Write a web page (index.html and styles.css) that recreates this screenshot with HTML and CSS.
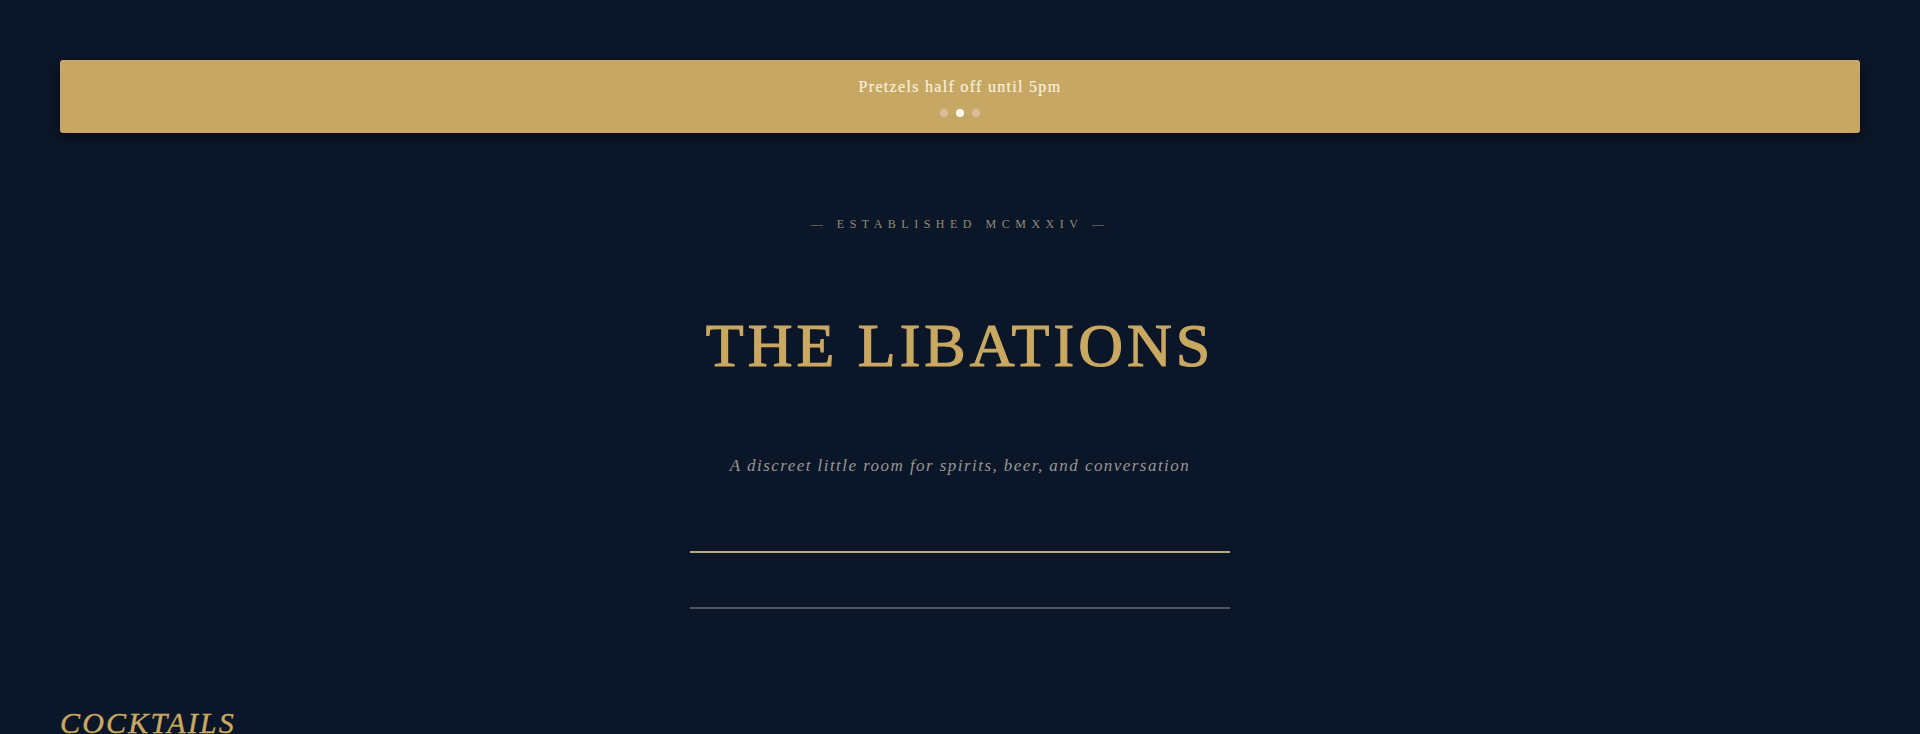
FILE: index.html
```html
<!DOCTYPE html>
<html lang="en">
<head>
<meta charset="utf-8">
<title>The Libations</title>
<link rel="stylesheet" href="styles.css">
</head>
<body>
  <div class="page">
    <div class="promo">
      <p class="promo-text">Pretzels half off until 5pm</p>
      <div class="dots">
        <span class="dot"></span>
        <span class="dot active"></span>
        <span class="dot"></span>
      </div>
    </div>

    <header class="hero">
      <p class="established">— ESTABLISHED MCMXXIV —</p>
      <h1 class="title">THE LIBATIONS</h1>
      <p class="tagline">A discreet little room for spirits, beer, and conversation</p>
      <div class="rule rule-gold"></div>
      <div class="rule rule-grey"></div>
    </header>

    <section class="menu">
      <h2 class="section-title">COCKTAILS</h2>
    </section>
  </div>
</body>
</html>
```
FILE: styles.css
```css
html, body {
  margin: 0;
  padding: 0;
  background: #0b1628;
}
body {
  font-family: "Liberation Serif", "DejaVu Serif", serif;
  height: 734px;
  overflow: hidden;
}
.page {
  padding: 60px 60px 0;
}
.promo {
  background: #c6a864;
  border-radius: 3px;
  box-shadow: 0 4px 10px rgba(0, 0, 0, 0.45);
  padding: 17px 0 16px;
  display: flex;
  flex-direction: column;
  align-items: center;
}
.promo-text {
  margin: 0;
  font-size: 16px;
  line-height: 20px;
  letter-spacing: 1.3px;
  color: #f9f1de;
  -webkit-text-stroke: 0.2px #f9f1de;
}
.dots {
  display: flex;
  gap: 8px;
  margin-top: 12px;
}
.dot {
  width: 8px;
  height: 8px;
  border-radius: 50%;
  background: rgba(238, 200, 190, 0.6);
}
.dot.active {
  background: #fffbef;
}
.hero {
  display: flex;
  flex-direction: column;
  align-items: center;
}
.established {
  margin: 83px 0 0;
  font-size: 12px;
  line-height: 16px;
  letter-spacing: 5.5px;
  color: #948d77;
}
.title {
  margin: 82px 0 0;
  font-size: 62px;
  line-height: 1;
  font-weight: 400;
  letter-spacing: 4px;
  color: #c9a862;
  -webkit-text-stroke: 1.2px #c9a862;
}
.tagline {
  margin: 80px 0 0;
  font-size: 17px;
  line-height: 20px;
  font-style: italic;
  letter-spacing: 1.45px;
  color: #979793;
}
.rule {
  width: 540px;
  height: 2px;
}
.rule-gold {
  margin-top: 75px;
  background: #b9aa7c;
}
.rule-grey {
  margin-top: 54px;
  background: #4b5662;
}
.menu {
  margin-top: 96px;
}
.section-title {
  margin: 0;
  font-size: 30px;
  line-height: 36px;
  font-weight: 400;
  font-style: italic;
  letter-spacing: 2.2px;
  color: #c9a862;
  -webkit-text-stroke: 0.4px #c9a862;
}
```
